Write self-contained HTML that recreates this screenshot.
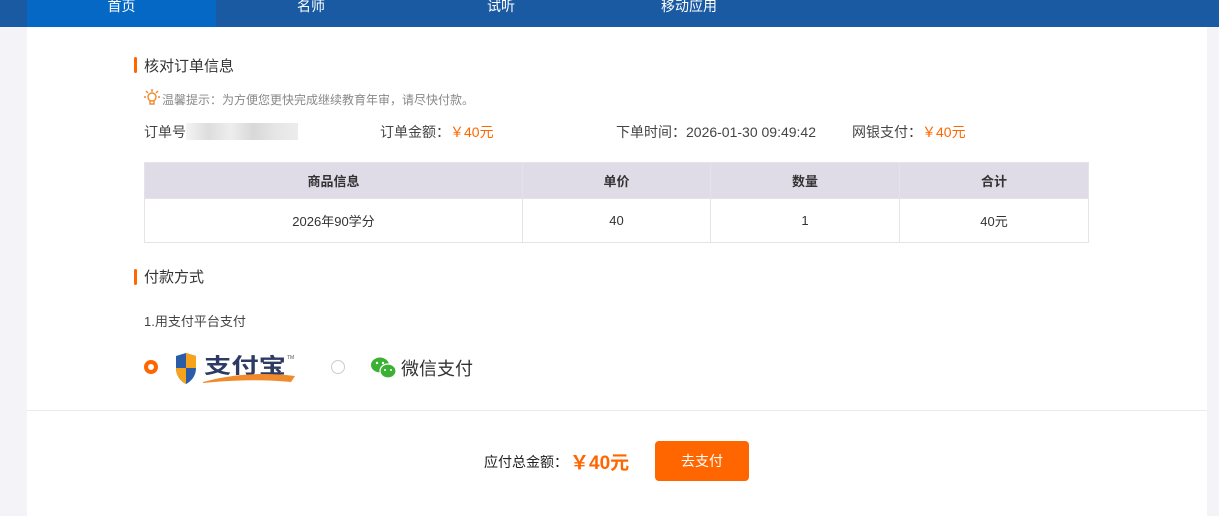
<!DOCTYPE html>
<html><head><meta charset="utf-8">
<style>
*{margin:0;padding:0;box-sizing:border-box}
body{width:1219px;height:516px;background:#f4f4f8;font-family:"Liberation Sans","Noto Sans CJK SC",sans-serif;color:#333;position:relative;overflow:hidden}
.nav{position:absolute;left:0;top:0;width:1219px;height:27px;background:#1a5aa3}
.nav span{position:absolute;top:-2px;height:29px;line-height:16px;color:#fff;font-size:14px;text-align:center}
.main{position:absolute;left:27px;top:27px;width:1180px;height:489px;background:#fff}
.abs{position:absolute;white-space:nowrap}
.title{font-size:15px;color:#333}
.bar{position:absolute;width:3px;height:16px;background:#ff6600;border-radius:2px}
.org{color:#ff6600}
table{position:absolute;left:144px;top:162px;width:945px;border-collapse:collapse;font-size:13px;color:#333}
td,th{border:1px solid #e3e3e8;text-align:center}
th{background:#dfdce8;height:36px;font-weight:bold}
td{height:44px}
svg{overflow:visible}
</style></head><body>
<div class="nav">
<span style="left:27px;width:189px;background:#0568c4">首页</span>
<span style="left:216px;width:190px">名师</span>
<span style="left:406px;width:190px">试听</span>
<span style="left:596px;width:186px">移动应用</span>
</div>
<div class="main"></div>
<div class="bar" style="left:134px;top:57px"></div>
<div class="abs title" style="left:144px;top:55px">核对订单信息</div>
<svg class="abs" style="left:144px;top:88px" width="16" height="18" viewBox="0 0 16 18"><g stroke="#f08a2c" stroke-width="1.4" fill="none"><circle cx="8" cy="9" r="4"/><path d="M6 13v3h4v-3M8 1v3M2 3l2 2M14 3l-2 2M0 9h2M14 9h2"/></g></svg>
<div class="abs" style="left:162px;top:91px;font-size:12px;color:#888">温馨提示：为方便您更快完成继续教育年审，请尽快付款。</div>
<div class="abs" style="left:144px;top:122px;font-size:14px;color:#444">订单号</div>
<div class="abs" style="left:186px;top:123px;width:112px;height:17px;background:linear-gradient(90deg,#f4f4f4,#ddd,#eee,#d8d8d8,#e6e6e6,#ececec)"></div>
<div class="abs" style="left:380px;top:122px;font-size:14px;color:#444">订单金额：<span class="org">￥40元</span></div>
<div class="abs" style="left:616px;top:122px;font-size:14px;color:#444">下单时间：2026-01-30 09:49:42</div>
<div class="abs" style="left:852px;top:122px;font-size:14px;color:#444">网银支付：<span class="org">￥40元</span></div>
<table>
<tr><th style="width:378px">商品信息</th><th style="width:188px">单价</th><th style="width:189px">数量</th><th>合计</th></tr>
<tr><td>2026年90学分</td><td>40</td><td>1</td><td>40元</td></tr>
</table>
<div class="bar" style="left:134px;top:269px"></div>
<div class="abs title" style="left:144px;top:266px">付款方式</div>
<div class="abs" style="left:144px;top:311px;font-size:13px;color:#444">1.用支付平台支付</div>
<div class="abs" style="left:144px;top:360px;width:14px;height:14px;border-radius:50%;border:4px solid #ff6600;background:#fff"></div>
<svg class="abs" style="left:173px;top:352px" width="125" height="34" viewBox="0 0 125 34">
<path d="M3 4l10-3 10 3v12c0 9-6 14-10 16C9 30 3 25 3 16z" fill="#2a5ca8"/>
<path d="M13 1l10 3v12H13z" fill="#f7a21b"/><path d="M3 16h10v16C9 30 3 25 3 16z" fill="#f7a21b"/>
<text x="31" y="21" font-size="21" font-weight="bold" fill="#2d3a63" font-family="Noto Sans CJK SC" textLength="82" lengthAdjust="spacingAndGlyphs">支付宝</text>
<text x="114" y="7" font-size="5" fill="#555">TM</text>
<path d="M30 30c30-8 60-10 92-6l-4 6c-30-3-58-2-88 1z" fill="#f08a2c"/>
</svg>
<div class="abs" style="left:331px;top:360px;width:14px;height:14px;border-radius:50%;border:1px solid #ccc"></div>
<svg class="abs" style="left:370px;top:356px" width="28" height="24" viewBox="0 0 28 24"><ellipse cx="10" cy="9" rx="9" ry="7.5" fill="#3cb035"/><ellipse cx="18" cy="15" rx="8" ry="7" fill="#3cb035" stroke="#fff" stroke-width="1.2"/><circle cx="7" cy="7" r="1.2" fill="#fff"/><circle cx="13" cy="7" r="1.2" fill="#fff"/><circle cx="15" cy="14" r="1" fill="#fff"/><circle cx="21" cy="14" r="1" fill="#fff"/></svg>
<div class="abs" style="left:401px;top:355px;font-size:18px;color:#333">微信支付</div>
<div class="abs" style="left:27px;top:410px;width:1180px;height:1px;background:#ebebeb"></div>
<div class="abs" style="left:484px;top:452px;font-size:14px;color:#222">应付总金额：</div>
<div class="abs" style="left:570px;top:448px;font-size:19px;font-weight:bold;color:#ff6600">￥40元</div>
<div class="abs" style="left:655px;top:441px;width:94px;height:40px;background:#ff6600;border-radius:4px;color:#fff;font-size:14px;text-align:center;line-height:40px">去支付</div>
</body></html>
